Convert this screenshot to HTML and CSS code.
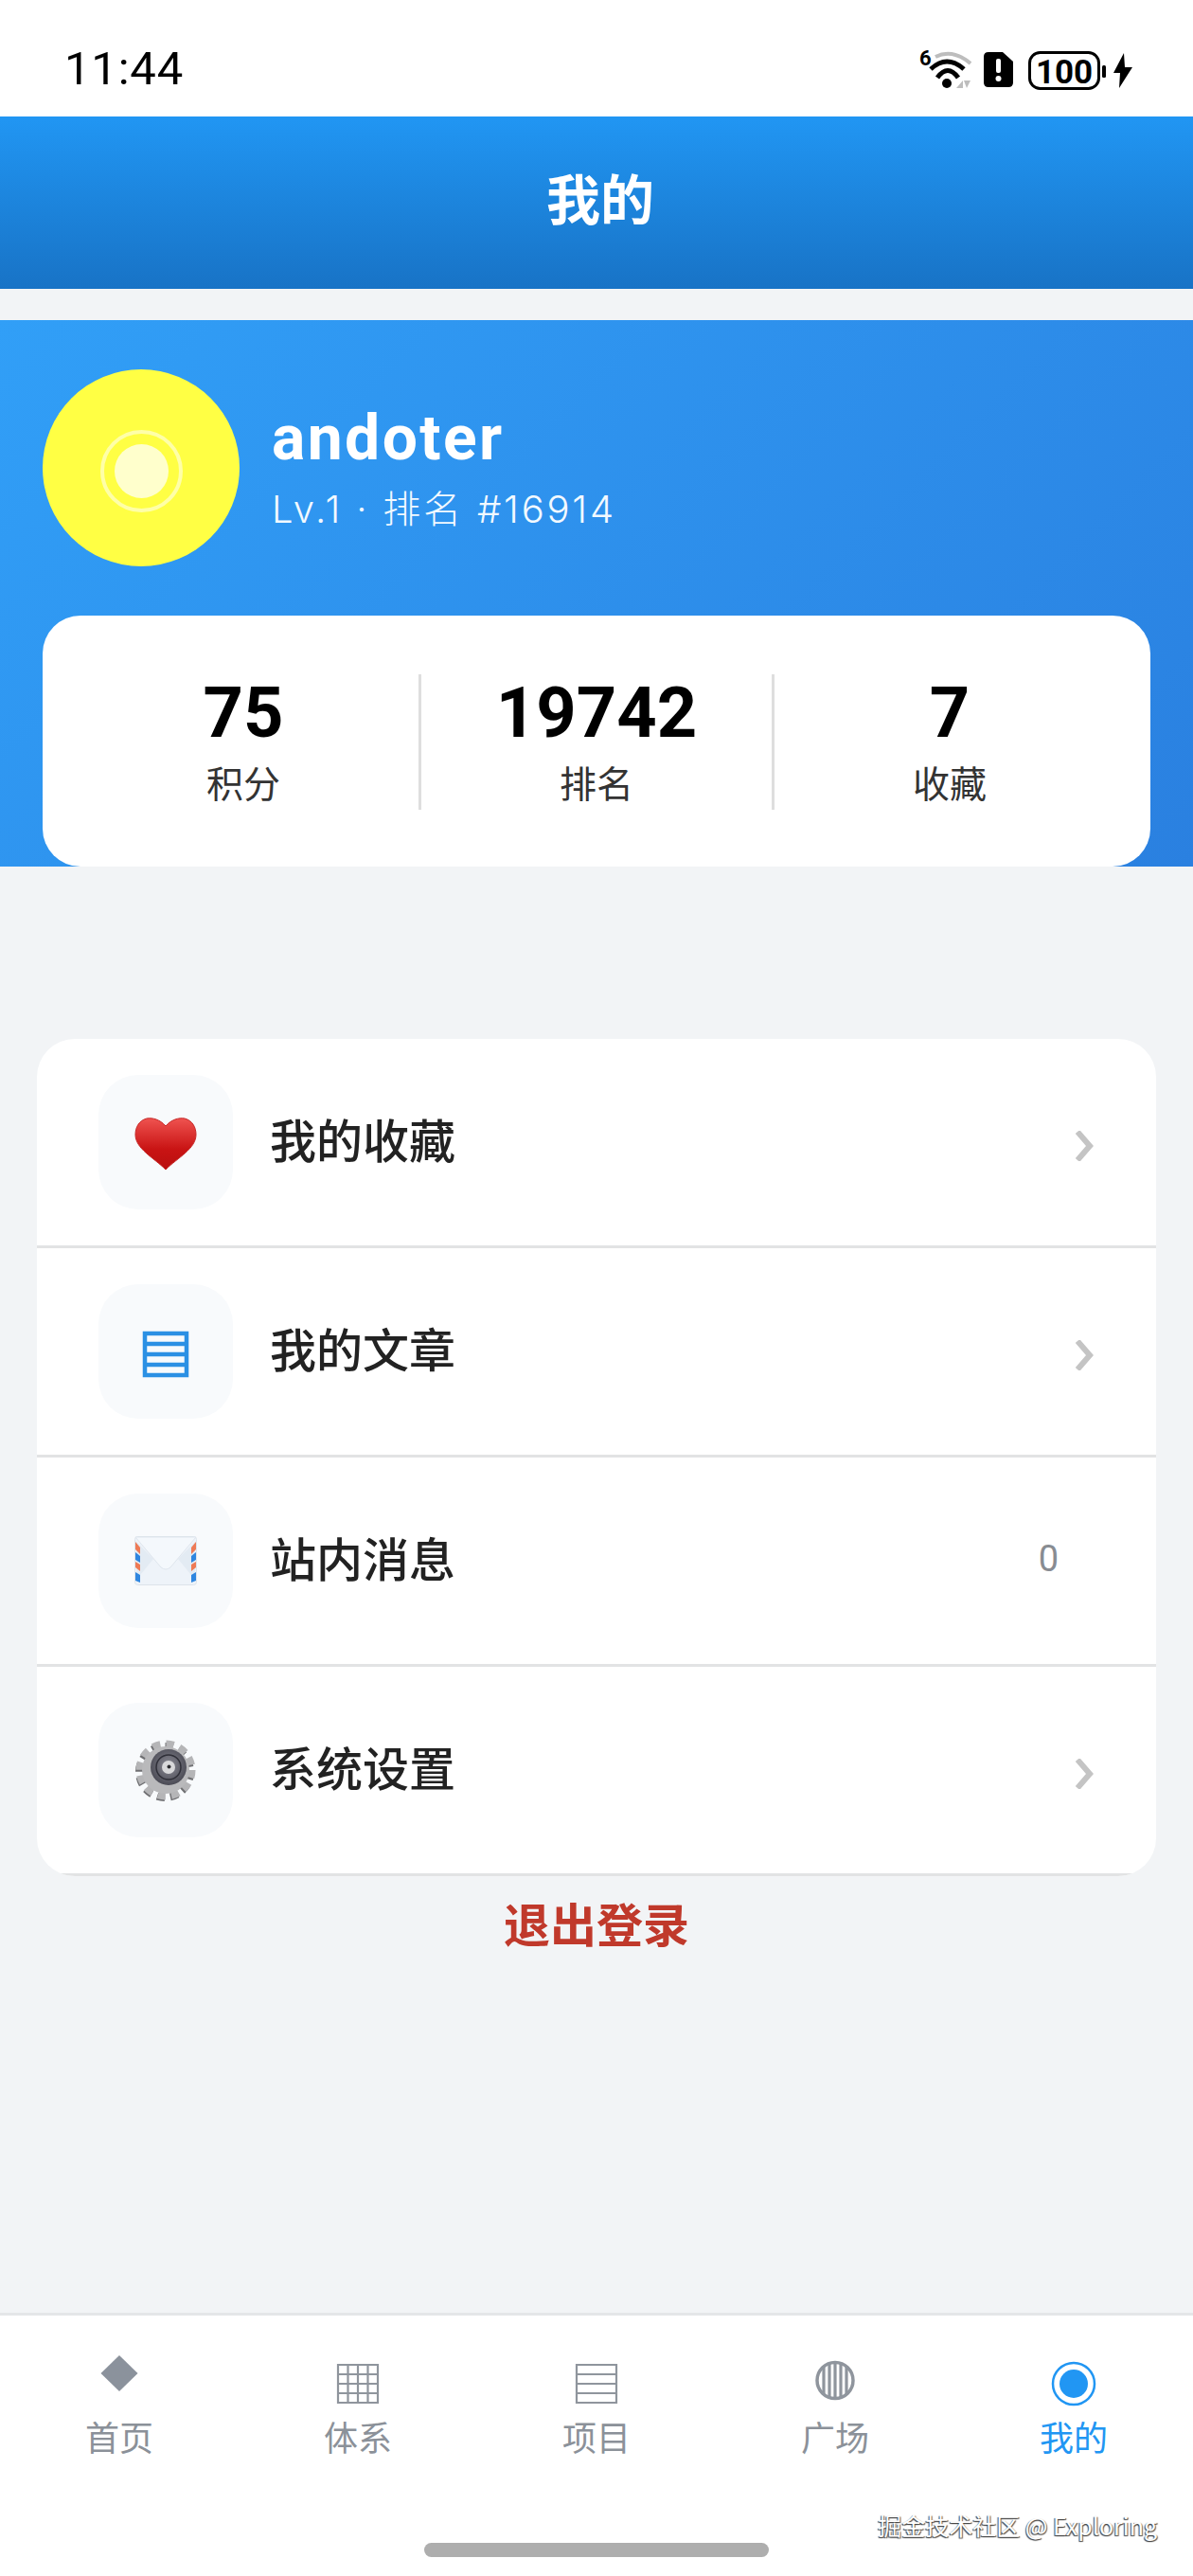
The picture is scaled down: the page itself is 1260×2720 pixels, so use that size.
FILE: index.html
```html
<!DOCTYPE html>
<html lang="zh-CN">
<head>
  <meta charset="UTF-8">
  <meta name="viewport" content="width=device-width, initial-scale=1.0">
  <title>我的</title>
  <link rel="stylesheet" href="styles.css">
</head>
<body class="body">
  <div class="screen">
    <!-- Статус-бар -->
    <div class="status">
      <span class="time">11:44</span>
      <svg class="status-icons" width="240" height="60" viewBox="0 0 240 60">
        <text x="11" y="14" class="net">6</text>
        <path d="M28 5 Q46 -4 65 12" fill="none" stroke="#bdbdbd" stroke-width="4"/>
        <path d="M23 18 Q40 2 58 18" fill="none" stroke="#000" stroke-width="5"/>
        <path d="M30 27 Q41 12 52 27" fill="none" stroke="#000" stroke-width="5"/>
        <circle cx="40" cy="33" r="5" fill="#000"/>
        <path d="M50 38 L57 30 V38 Z M58 30 H65 L61 38 Z" fill="#bdbdbd"/>
        <path d="M84 0 H99 L110 10 V32 Q110 37 105 37 H84 Q79 37 79 32 V5 Q79 0 84 0 Z" fill="#000"/>
        <rect x="92" y="7" width="5" height="15" rx="2" fill="#fff"/>
        <circle cx="94.500" cy="28" r="3" fill="#fff"/>
        <rect x="127.500" y="0.500" width="73" height="38" rx="11" fill="none" stroke="#000" stroke-width="3"/>
        <text x="164" y="33" class="batt">100</text>
        <rect x="204" y="14" width="4" height="13" rx="1.500" fill="#000"/>
        <path d="M227 1 L216 22 H223 L222 38 L236 16 H228 Z" fill="#000"/>
      </svg>
    </div>

    <div class="appbar">我的</div>

    <div class="profile">
      <div class="user">
        <div class="avatar">
          <div class="avatar-ring"><div class="avatar-dot"></div></div>
        </div>
        <div class="user-info">
          <div class="user-name">andoter</div>
          <div class="user-sub">Lv.1 · 排名 #16914</div>
        </div>
      </div>
      <div class="stats">
        <div class="stat">
          <div class="stat-value">75</div>
          <div class="stat-label">积分</div>
        </div>
        <div class="stat-line"></div>
        <div class="stat">
          <div class="stat-value">19742</div>
          <div class="stat-label">排名</div>
        </div>
        <div class="stat-line"></div>
        <div class="stat">
          <div class="stat-value">7</div>
          <div class="stat-label">收藏</div>
        </div>
      </div>
    </div>

    <div class="menu">
      <div class="menu-row">
        <div class="menu-icon">
          <svg class="heart-icon" width="66" height="56" viewBox="0 0 66 56">
            <defs>
              <linearGradient id="heart" x1="0" y1="0" x2="0" y2="1">
                <stop offset="0" stop-color="#ef5350"/>
                <stop offset="0.6" stop-color="#c91414"/>
                <stop offset="1" stop-color="#b90f0f"/>
              </linearGradient>
            </defs>
            <path d="M33 9 C27 2 19 0 13 1 C5 3 1 10 1 18 C1 33 20 42 33 55 C46 42 65 33 65 18 C65 10 61 3 53 1 C47 0 39 2 33 9 Z" fill="url(#heart)" stroke="#c62828" stroke-width="1"/>
          </svg>
        </div>
        <div class="menu-text">我的收藏</div>
        <svg class="chevron" width="20" height="32" viewBox="0 0 20 32"><path d="M2 1 L15 16 L2 31" fill="none" stroke="#c4c4c4" stroke-width="6"/></svg>
      </div>
      <div class="menu-row">
        <div class="menu-icon">
          <svg class="list-icon" width="50" height="50" viewBox="0 0 50 50">
            <path d="M3 3 H47 V47 H3 Z M3 14 H47 M3 25 H47 M3 36 H47" fill="none" stroke="#2b90e4" stroke-width="4.500"/>
          </svg>
        </div>
        <div class="menu-text">我的文章</div>
        <svg class="chevron" width="20" height="32" viewBox="0 0 20 32"><path d="M2 1 L15 16 L2 31" fill="none" stroke="#c4c4c4" stroke-width="6"/></svg>
      </div>
      <div class="menu-row">
        <div class="menu-icon">
          <svg width="66" height="52" viewBox="0 0 66 52">
            <rect x="0.500" y="0.500" width="65" height="51" rx="3" fill="#eef3f9" stroke="#dde3ea"/>
            <path d="M20 24 L2 46 V6 Z M46 24 L64 46 V6 Z" fill="#e3ebf3"/>
            <path d="M1 1 H65 L38 33 Q33 37 28 33 Z" fill="#f4f8fc" stroke="#dfe6ee"/>
            <path d="M1 6 L6 12 V19 L1 14 Z M1 27 L6 30 V37 L1 33 Z" fill="#ee7a55"/>
            <path d="M1 17 L6 21 V28 L1 25 Z M1 38 L6 41 V49 L1 47 Z" fill="#2f86e0"/>
            <path d="M65 17 L60 21 V28 L65 25 Z M65 38 L60 41 V49 L65 47 Z" fill="#2f86e0"/>
            <path d="M65 6 L60 12 V19 L65 14 Z M65 27 L60 30 V37 L65 33 Z" fill="#ee7a55"/>
          </svg>
        </div>
        <div class="menu-text">站内消息</div>
        <div class="menu-count">0</div>
      </div>
      <div class="menu-row">
        <div class="menu-icon">
          <svg width="66" height="66" viewBox="0 0 66 66">
            <defs>
              <radialGradient id="disc" cx="0.500" cy="0.450" r="0.600">
                <stop offset="0" stop-color="#8a8a94"/>
                <stop offset="1" stop-color="#45454f"/>
              </radialGradient>
            </defs>
            <circle cx="32" cy="35" r="27" fill="none" stroke="#6f6f72" stroke-width="8" stroke-dasharray="8 6.140"/>
            <circle cx="33" cy="33" r="27" fill="none" stroke="#b5b5b7" stroke-width="9" stroke-dasharray="8 6.140"/>
            <circle cx="33" cy="33" r="25" fill="#b9b9bb"/>
            <circle cx="36" cy="30" r="19" fill="url(#disc)"/>
            <circle cx="36" cy="30" r="13" fill="none" stroke="#2f2f38" stroke-width="1.500"/>
            <circle cx="36" cy="30" r="7" fill="#d8d8da"/>
            <circle cx="36.500" cy="29.500" r="2" fill="#2c2c30"/>
          </svg>
        </div>
        <div class="menu-text">系统设置</div>
        <svg class="chevron" width="20" height="32" viewBox="0 0 20 32"><path d="M2 1 L15 16 L2 31" fill="none" stroke="#c4c4c4" stroke-width="6"/></svg>
      </div>
    </div>

    <div class="logout">退出登录</div>

    <nav class="tabbar">
      <div class="tabs">
        <div class="tab">
          <svg class="tab-icon" width="46" height="60" viewBox="0 0 46 60"><path d="M23 0 L42.500 19 L23 38 L3.500 19 Z" fill="#8b929c"/></svg>
          <span>首页</span>
        </div>
        <div class="tab">
          <svg class="tab-icon" width="46" height="60" viewBox="0 0 46 60">
            <path d="M2 10 H44 V50 H2 Z M12.500 10 V50 M23 10 V50 M33.500 10 V50 M2 20 H44 M2 30 H44 M2 40 H44" fill="none" stroke="#8f959d" stroke-width="2.200"/>
          </svg>
          <span>体系</span>
        </div>
        <div class="tab">
          <svg class="tab-icon" width="46" height="60" viewBox="0 0 46 60">
            <path d="M2 10 H44 V50 H2 Z M2 20 H44 M2 30 H44 M2 40 H44" fill="none" stroke="#8f959d" stroke-width="2.200"/>
          </svg>
          <span>项目</span>
        </div>
        <div class="tab">
          <svg class="tab-icon" width="46" height="60" viewBox="0 0 46 60">
            <circle cx="23" cy="26.500" r="19" fill="none" stroke="#8f959d" stroke-width="3.500"/>
            <path d="M11 12 V41 M17 8 V45 M23 7 V46 M29 8 V45 M35 12 V41" fill="none" stroke="#8f959d" stroke-width="3.200"/>
          </svg>
          <span>广场</span>
        </div>
        <div class="tab tab-active">
          <svg class="tab-icon" width="48" height="60" viewBox="0 0 48 60">
            <circle cx="24" cy="30" r="22" fill="none" stroke="#2196f3" stroke-width="2.500"/>
            <circle cx="24" cy="30" r="15" fill="#2196f3"/>
          </svg>
          <span>我的</span>
        </div>
      </div>
      <div class="home-bar"></div>
    </nav>

    <div class="watermark">掘金技术社区 @ Exploring</div>
  </div>
</body>
</html>
```
FILE: styles.css
```css
.body {
  margin: 0;
  background-color: #F2F4F6;
  font-family: "Noto Sans CJK SC", Roboto, sans-serif;
}
.screen {
  position: relative;
  width: 1260px;
  height: 2720px;
  display: flex;
  flex-direction: column;
  overflow: hidden;
}
.status {
  height: 123px;
  padding: 0 60px 0 68px;
  box-sizing: border-box;
  display: flex;
  justify-content: space-between;
  background-color: #fff;
}
.time {
  margin-top: 41px;
  font-family: Roboto, sans-serif;
  font-size: 49px;
  line-height: 64px;
  letter-spacing: 0.8px;
  color: #000;
}
.status-icons {
  margin-top: 55px;
  overflow: visible;
}
.net {
  font-family: Roboto, sans-serif;
  font-size: 22px;
  font-weight: 700;
  fill: #000;
}
.batt {
  font-family: Roboto, sans-serif;
  font-size: 35px;
  font-weight: 700;
  text-anchor: middle;
  fill: #000;
}
.appbar {
  height: 182px;
  padding: 0 0 14px 8px;
  box-sizing: border-box;
  display: flex;
  align-items: center;
  justify-content: center;
  font-size: 57px;
  font-weight: 700;
  color: #fff;
  background: linear-gradient(180deg, #2196F3, #1873C6);
}
.profile {
  margin-top: 33px;
  height: 577px;
  padding: 52px 45px 0;
  box-sizing: border-box;
  display: flex;
  flex-direction: column;
  background: linear-gradient(135deg, #319FF7, #2A80E0);
}
.user {
  display: flex;
  align-items: center;
  gap: 34px;
}
.avatar {
  width: 208px;
  height: 208px;
  padding-top: 6px;
  box-sizing: border-box;
  border-radius: 50%;
  display: flex;
  align-items: center;
  justify-content: center;
  background-color: #FFFF44;
}
.avatar-ring {
  width: 87px;
  height: 87px;
  box-sizing: border-box;
  border: 4px solid #FFFFA8;
  border-radius: 50%;
  display: flex;
  align-items: center;
  justify-content: center;
}
.avatar-dot {
  width: 57px;
  height: 57px;
  border-radius: 50%;
  background-color: #FFFFCC;
}
.user-name {
  font-family: Roboto, sans-serif;
  font-size: 66px;
  font-weight: 700;
  line-height: 80px;
  letter-spacing: 2.4px;
  color: #fff;
}
.user-sub {
  margin-top: 7px;
  font-family: Inter, "Noto Sans CJK SC", sans-serif;
  font-size: 40px;
  font-weight: 300;
  line-height: 56px;
  letter-spacing: 2.8px;
  color: #F2F9FF;
}
.stats {
  margin-top: 52px;
  height: 265px;
  padding: 2px 27px 0;
  box-sizing: border-box;
  display: flex;
  align-items: center;
  border-radius: 40px;
  background-color: #fff;
}
.stat {
  flex: 1;
  display: flex;
  flex-direction: column;
  align-items: center;
}
.stat-line {
  width: 3px;
  height: 143px;
  background-color: #DEDEDE;
}
.stat-value {
  margin: -3px 0 2px;
  font-family: Roboto, sans-serif;
  font-size: 74px;
  font-weight: 700;
  line-height: 84px;
  color: #000;
}
.stat-label {
  font-size: 39px;
  line-height: 56px;
  color: #333;
}
.menu {
  margin: 182px 39px 0;
  border-radius: 40px;
  overflow: hidden;
  background-color: #fff;
}
.menu-row {
  height: 221px;
  padding: 0 65px 0 65px;
  box-sizing: border-box;
  display: flex;
  align-items: center;
  border-bottom: 3px solid #E2E3E4;
}
.menu-icon {
  width: 142px;
  height: 142px;
  margin-right: 39px;
  display: flex;
  align-items: center;
  justify-content: center;
  border-radius: 42px;
  background-color: #F8FAFC;
}
.heart-icon {
  margin-top: 4px;
}
.list-icon {
  margin-top: 6px;
}
.menu-text {
  flex: 1;
  padding-bottom: 10px;
  font-size: 49px;
  font-weight: 500;
  color: #222;
}
.chevron {
  margin-top: 8px;
}
.menu-count {
  margin: 0 38px 4px 0;
  font-family: Roboto, sans-serif;
  font-size: 38px;
  color: #888C92;
}
.logout {
  margin-top: 13px;
  text-align: center;
  font-size: 49px;
  font-weight: 700;
  line-height: 72px;
  color: #C0392B;
}
.tabbar {
  margin-top: auto;
  height: 278px;
  box-sizing: border-box;
  border-top: 3px solid #E4E6E8;
  display: flex;
  flex-direction: column;
  background-color: #fff;
}
.tabs {
  display: flex;
  height: 240px;
  padding-top: 42px;
  box-sizing: border-box;
}
.tab {
  width: 252px;
  display: flex;
  flex-direction: column;
  align-items: center;
  font-size: 36px;
  line-height: 48px;
  color: #8B9199;
}
.tab-icon {
  margin-bottom: 1px;
  overflow: visible;
}
.tab-active {
  color: #2196F3;
}
.home-bar {
  width: 364px;
  height: 15px;
  margin: 0 auto;
  border-radius: 8px;
  background-color: #AEAEAE;
}
.watermark {
  position: absolute;
  top: 2649px;
  right: 38px;
  font-size: 25px;
  line-height: 34px;
  white-space: nowrap;
  color: #fff;
  text-shadow: -1px 1px 1px #444, 1px 1px 1px #555;
}
```
